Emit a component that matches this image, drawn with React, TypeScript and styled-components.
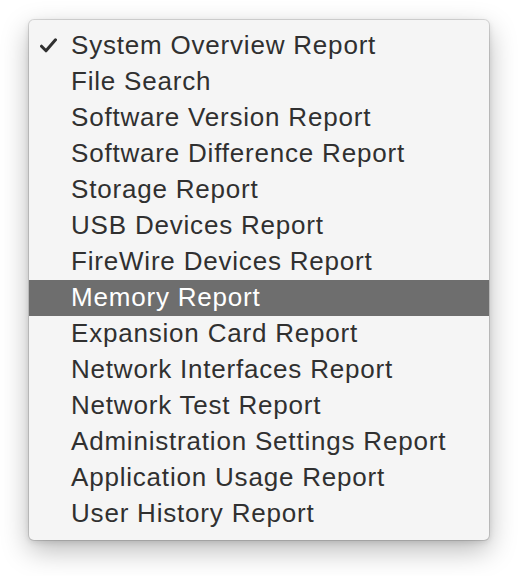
import React from "react";
import styled, { createGlobalStyle } from "styled-components";

const Global = createGlobalStyle`
  html, body { margin: 0; padding: 0; background: #ffffff; }
  body { font-family: "Liberation Sans", Arial, sans-serif; }
`;

const Page = styled.div`
  padding: 20px 29px;
  width: 518px;
  height: 576px;
  box-sizing: border-box;
`;

const Menu = styled.ul`
  list-style: none;
  margin: 0;
  padding: 8px 0;
  width: 460px;
  box-sizing: border-box;
  background: #f5f5f5;
  border-radius: 5px;
  box-shadow: 0 0 0 1px rgba(0, 0, 0, 0.12), 0 10px 28px rgba(0, 0, 0, 0.28),
    0 2px 6px rgba(0, 0, 0, 0.12);
`;

const Item = styled.li<{ $active?: boolean }>`
  display: flex;
  align-items: center;
  height: 36px;
  box-sizing: border-box;
  padding: 0 0 2px 11px;
  background: ${(p) => (p.$active ? "#6e6e6e" : "transparent")};
  color: ${(p) => (p.$active ? "#ffffff" : "#303030")};
  font-size: 26px;
  letter-spacing: 0.8px;
  white-space: nowrap;
`;

const CheckSlot = styled.span`
  width: 31px;
  display: flex;
  align-items: center;
  flex: none;
`;

const Check = () => (
  <svg width="17" height="15" viewBox="0 0 17 15">
    <path
      d="M1.5 8.2 L6 12.8 L15.5 1.8"
      fill="none"
      stroke="#303030"
      strokeWidth="3"
      strokeLinejoin="round"
      strokeLinecap="round"
    />
  </svg>
);

const items = [
  "System Overview Report",
  "File Search",
  "Software Version Report",
  "Software Difference Report",
  "Storage Report",
  "USB Devices Report",
  "FireWire Devices Report",
  "Memory Report",
  "Expansion Card Report",
  "Network Interfaces Report",
  "Network Test Report",
  "Administration Settings Report",
  "Application Usage Report",
  "User History Report",
];

export default function App() {
  return (
    <>
      <Global />
      <Page>
        <Menu>
          {items.map((label, i) => (
            <Item key={label} $active={i === 7}>
              <CheckSlot>{i === 0 ? <Check /> : null}</CheckSlot>
              {label}
            </Item>
          ))}
        </Menu>
      </Page>
    </>
  );
}
